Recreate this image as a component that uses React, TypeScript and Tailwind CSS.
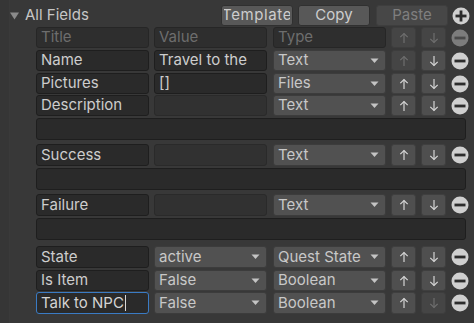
import React from "react";

const font = { fontFamily: "Inter, 'Noto Sans', sans-serif" };

function Arrow({ dir, enabled }: { dir: "up" | "down"; enabled: boolean }) {
  const c = enabled ? "#d6d6d6" : "#6e6e6e";
  return (
    <svg width="10" height="12" viewBox="0 0 10 12">
      {dir === "up" ? (
        <g stroke={c} strokeWidth="1.2" fill="none">
          <path d="M5 1.5 V11" />
          <path d="M1.3 5.2 L5 1.5 L8.7 5.2" />
        </g>
      ) : (
        <g stroke={c} strokeWidth="1.2" fill="none">
          <path d="M5 1 V10.5" />
          <path d="M1.3 6.8 L5 10.5 L8.7 6.8" />
        </g>
      )}
    </svg>
  );
}

function MoveBtn({ dir, enabled }: { dir: "up" | "down"; enabled: boolean }) {
  return (
    <div
      className={`w-[25px] h-full rounded-[3px] border flex items-center justify-center ${
        enabled ? "bg-[#4f4f4f] border-[#3f3f3f]" : "bg-[#454545] border-[#3d3d3d]"
      }`}
    >
      <Arrow dir={dir} enabled={enabled} />
    </div>
  );
}

function Circle({ kind, dim }: { kind: "plus" | "minus"; dim?: boolean }) {
  const bg = dim ? "#7c7c7c" : "#cfcfcf";
  const fg = dim ? "#4a4a4a" : "#2c2c2c";
  return (
    <svg width="18" height="18" viewBox="0 0 18 18">
      <circle cx="9" cy="9" r="8.5" fill={bg} />
      <rect x="3.5" y="7.6" width="11" height="2.8" fill={fg} />
      {kind === "plus" && <rect x="7.6" y="3.5" width="2.8" height="11" fill={fg} />}
    </svg>
  );
}

function Caret() {
  return (
    <svg width="9" height="6" viewBox="0 0 9 6" className="shrink-0">
      <path d="M0.5 0.5 L8.5 0.5 L4.5 5 Z" fill="#c4c4c4" />
    </svg>
  );
}

function TextField({
  text,
  header,
  empty,
  focus,
}: {
  text?: string;
  header?: boolean;
  empty?: boolean;
  focus?: boolean;
}) {
  let cls = "bg-[#2a2a2a] border-[#1e1e1e] text-[#cdcdcd]";
  if (header) cls = "bg-[#2e2e2e] border-[#262626] text-[#6d6d6d]";
  if (empty) cls = "bg-[#313131] border-[#2a2a2a] text-[#cdcdcd]";
  if (focus) cls = "bg-[#2a2a2a] border-[#3a7bc4] text-[#d4d4d4]";
  return (
    <div
      className={`w-[113px] h-full rounded-[3px] border pl-[4px] flex items-center overflow-hidden whitespace-nowrap text-[15px] ${cls}`}
    >
      {text}
      {focus && <span className="inline-block w-[1px] h-[16px] bg-[#d8d8d8] ml-[1px]" />}
    </div>
  );
}

function Dropdown({ text }: { text: string }) {
  return (
    <div className="w-[113px] h-full rounded-[3px] border border-[#3c3c3c] bg-[#515151] pl-[4px] pr-[6px] flex items-center justify-between text-[15px] text-[#c8c8c8] whitespace-nowrap overflow-hidden">
      <span>{text}</span>
      <Caret />
    </div>
  );
}

type RowProps = {
  title: string;
  value?: string;
  valueDropdown?: boolean;
  valueEmpty?: boolean;
  type: string;
  up: boolean;
  down: boolean;
  header?: boolean;
  focus?: boolean;
  className?: string;
};

function Row({ title, value, valueDropdown, valueEmpty, type, up, down, header, focus, className }: RowProps) {
  return (
    <div className={`flex items-stretch h-[21px] ${className ?? ""}`}>
      <TextField text={title} header={header} focus={focus} />
      <div className="ml-[5px]">
        {valueDropdown ? (
          <Dropdown text={value ?? ""} />
        ) : (
          <TextField text={value} header={header} empty={valueEmpty} />
        )}
      </div>
      <div className="ml-[6px]">
        {header ? <TextField text={type} header /> : <Dropdown text={type} />}
      </div>
      <div className="ml-[5px]">
        <MoveBtn dir="up" enabled={up} />
      </div>
      <div className="ml-[5px]">
        <MoveBtn dir="down" enabled={down} />
      </div>
      <div className="ml-[5px] flex items-center">
        <Circle kind="minus" dim={header} />
      </div>
    </div>
  );
}

function Area({ className }: { className?: string }) {
  return (
    <div
      className={`w-[430px] h-[22px] rounded-[3px] border border-[#1e1e1e] bg-[#2a2a2a] ${className ?? ""}`}
    />
  );
}

function TopButton({ label, disabled, wide }: { label: string; disabled?: boolean; wide?: boolean }) {
  return (
    <div
      className={`h-[21px] w-[72px] rounded-[3px] border px-[2px] flex items-center ${
        disabled
          ? "bg-[#474747] border-[#3e3e3e] text-[#7f7f7f]"
          : "bg-[#585858] border-[#303030] text-[#cdcdcd]"
      }`}
    >
      <div
        className={`w-full overflow-hidden flex justify-center whitespace-nowrap text-[15px] ${
          wide ? "tracking-[0.04em]" : ""
        }`}
      >
        {label}
      </div>
    </div>
  );
}

export default function App() {
  return (
    <div className="w-[474px] h-[323px] bg-[#383838] flex overflow-hidden" style={font}>
      <div className="w-[10px] h-full bg-[#363636] border-r border-[#3a3a3a]" />
      <div className="flex-1 flex flex-col">
        <div className="flex items-center h-[21px] mt-[5px]">
          <svg width="9" height="8" viewBox="0 0 9 8">
            <path d="M0 0.5 L9 0.5 L4.5 7.5 Z" fill="#8a8a8a" />
          </svg>
          <span className="ml-[6px] text-[15px] text-[#c6c6c6]">All Fields</span>
          <div className="ml-auto flex items-center">
            <TopButton label="Template" wide />
            <div className="ml-[5px]">
              <TopButton label="Copy" />
            </div>
            <div className="ml-[6px]">
              <TopButton label="Paste" disabled />
            </div>
            <div className="ml-[4px] mr-[4px] flex items-center">
              <Circle kind="plus" />
            </div>
          </div>
        </div>
        <div className="ml-[26px] flex flex-col">
          <Row className="mt-[1px]" header title="Title" value="Value" type="Type" up={false} down={false} />
          <Row className="mt-[2px]" title="Name" value="Travel to the" type="Text" up={false} down={true} />
          <Row className="mt-[2px]" title="Pictures" value="[]" type="Files" up={true} down={true} />
          <Row className="mt-[1px]" title="Description" valueEmpty type="Text" up={true} down={true} />
          <Area className="mt-[2px]" />
          <Row className="mt-[4px] h-[22px]" title="Success" valueEmpty type="Text" up={true} down={true} />
          <Area className="mt-[2px]" />
          <Row className="mt-[4px] h-[22px]" title="Failure" valueEmpty type="Text" up={true} down={true} />
          <Area className="mt-[2px]" />
          <Row className="mt-[6px] h-[22px]" title="State" value="active" valueDropdown type="Quest State" up={true} down={true} />
          <Row className="mt-[2px]" title="Is Item" value="False" valueDropdown type="Boolean" up={true} down={true} />
          <Row className="mt-[1px] h-[22px]" title="Talk to NPC" value="False" valueDropdown type="Boolean" up={true} down={false} focus />
        </div>
      </div>
    </div>
  );
}
